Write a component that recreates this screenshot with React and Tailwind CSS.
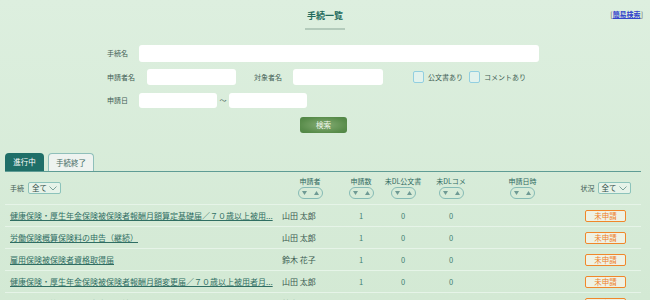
import React from "react";

const rows = [
    { name: "健康保険・厚生年金保険被保険者報酬月額算定基礎届／７０歳以上被用...", person: "山田 太郎" },
    { name: "労働保険概算保険料の申告（継続）", person: "山田 太郎" },
    { name: "雇用保険被保険者資格取得届", person: "鈴木 花子" },
    { name: "健康保険・厚生年金保険被保険者報酬月額変更届／７０歳以上被用者月...", person: "山田 太郎" },
    { name: "労働保険概算保険料の申告（継続）", person: "鈴木 花子" },
];

function SortPill() {
    return (
        <div className="w-[25px] h-[12px] rounded-full border border-[#86bbb5] flex items-center justify-center gap-[7px]">
            <svg width="5" height="4" viewBox="0 0 5 4"><path d="M0 0H5L2.5 4Z" fill="#6f9a94" /></svg>
            <svg width="5" height="4" viewBox="0 0 5 4"><path d="M0 4H5L2.5 0Z" fill="#6f9a94" /></svg>
        </div>
    );
}

function MiniSelect() {
    return (
        <div className="w-[33px] h-[12px] border border-[#8cc3bb] rounded-[2px] bg-[#e6f3e9] flex items-center justify-between pl-[3px] pr-[3px]">
            <span className="text-[7.5px] leading-none text-[#2f4a44]">全て</span>
            <svg width="8" height="5" viewBox="0 0 8 5"><path d="M0.5 0.5L4 4L7.5 0.5" stroke="#5f8c86" strokeWidth="0.8" fill="none" /></svg>
        </div>
    );
}

function ColHead({ label, className }) {
    return (
        <div className={"flex flex-col items-center gap-[2px] " + className}>
            <span className="text-[7px] leading-[8px] text-[#2f6a60] whitespace-nowrap">{label}</span>
            <SortPill />
        </div>
    );
}

function Checkbox({ label }) {
    return (
        <div className="flex items-center">
            <div className="w-[11px] h-[12px] rounded-[2px] border-[1.5px] border-[#92cfe0] bg-[#e2f2ec]"></div>
            <span className="ml-[4px] text-[7px] text-[#3f5e55] whitespace-nowrap">{label}</span>
        </div>
    );
}

export default function App() {
    return (
        <div className="w-[650px] h-[300px] overflow-hidden relative bg-gradient-to-b from-[#ddefdf] to-[#d3e9d4] font-['Noto_Sans_CJK_JP',sans-serif]">
            {/* Header */}
            <div className="h-[45px] relative">
                <div className="pt-[10px] flex flex-col items-center">
                    <h1 className="text-[9px] leading-[12px] font-bold text-[#226a5c]">手続一覧</h1>
                    <div className="mt-[6px] w-[40px] h-[2px] bg-[#b3cbbb]"></div>
                </div>
                <div className="absolute right-[7px] top-[9px] text-[7px] text-[#555]">
                    [<span className="text-[#3344cc] underline font-bold">簡易検索</span>]
                </div>
            </div>

            {/* Search form */}
            <div className="pl-[107px]">
                <div className="flex items-center h-[17px]">
                    <span className="w-[32px] text-[7px] text-[#3f5e55]">手続名</span>
                    <div className="w-[400px] h-[17px] bg-white rounded-[3px]"></div>
                </div>
                <div className="flex items-center h-[16px] mt-[7px]">
                    <span className="w-[40px] text-[7px] text-[#3f5e55]">申請者名</span>
                    <div className="w-[89px] h-[16px] bg-white rounded-[3px]"></div>
                    <span className="ml-[18px] w-[39px] text-[7px] text-[#3f5e55]">対象者名</span>
                    <div className="w-[90px] h-[16px] bg-white rounded-[3px]"></div>
                    <div className="ml-[30px]"><Checkbox label="公文書あり" /></div>
                    <div className="ml-[6px]"><Checkbox label="コメントあり" /></div>
                </div>
                <div className="flex items-center h-[15px] mt-[8px]">
                    <span className="w-[32px] text-[7px] text-[#3f5e55]">申請日</span>
                    <div className="w-[78px] h-[15px] bg-white rounded-[3px]"></div>
                    <span className="w-[12px] text-center text-[7px] text-[#4a6a60]">～</span>
                    <div className="w-[78px] h-[15px] bg-white rounded-[3px]"></div>
                </div>
                <button className="mt-[9px] ml-[193px] w-[47px] h-[16px] rounded-[3px] bg-[radial-gradient(ellipse_at_center,#86ad75_0%,#5a8d4c_70%,#4e8443_100%)] text-[7.5px] text-[#eef6ea] flex items-center justify-center">
                    検索
                </button>
            </div>

            {/* Tabs */}
            <div className="mt-[20px] mx-[5px] w-[636px] flex items-end gap-[4px] border-b border-[#5f9c95]">
                <div className="w-[39px] h-[18px] rounded-t-[4px] bg-[#1f6f68] text-white text-[7.5px] flex items-center justify-center">進行中</div>
                <div className="w-[46px] h-[18px] rounded-t-[4px] bg-[#eef3f0] border border-b-0 border-[#8fbfba] text-[#3f6a62] text-[7.5px] flex items-center justify-center">手続終了</div>
            </div>

            {/* Table */}
            <div className="mx-[5px] w-[636px]">
                <div className="h-[33px] flex items-center border-b border-[#e6f4e8]">
                    <div className="w-[272px] pl-[5px] flex items-center gap-[4px]">
                        <span className="text-[7px] text-[#3f5e55]">手続</span>
                        <MiniSelect />
                    </div>
                    <ColHead label="申請者" className="w-[66px]" />
                    <ColHead label="申請数" className="w-[36px]" />
                    <ColHead label="未DL公文書" className="w-[48px]" />
                    <ColHead label="未DLコメ" className="w-[48px]" />
                    <ColHead label="申請日時" className="w-[95px]" />
                    <div className="w-[71px] flex items-center justify-center gap-[3px]">
                        <span className="text-[7px] text-[#3f5e55]">状況</span>
                        <MiniSelect />
                    </div>
                </div>
                {rows.map((r, i) => (
                    <div key={i} className="h-[22px] flex items-center border-b border-[#e6f4e8]">
                        <div className="w-[272px] pl-[5px] whitespace-nowrap overflow-hidden text-[8px] text-[#2f6e63]">
                            <span className="underline">{r.name}</span>
                        </div>
                        <div className="w-[66px] pl-[5px] text-[8px] text-[#3a5a50]">{r.person}</div>
                        <div className="w-[36px] text-center text-[7.5px] text-[#3f7f74]">1</div>
                        <div className="w-[48px] text-center text-[7.5px] text-[#3f7f74]">0</div>
                        <div className="w-[48px] text-center text-[7.5px] text-[#3f7f74]">0</div>
                        <div className="w-[95px]"></div>
                        <div className="w-[71px] flex justify-center">
                            <div className="w-[41px] h-[12px] rounded-[2px] border border-[#f0872a] bg-[#eef2e4] text-[7.5px] text-[#ef7f2a] flex items-center justify-center">未申請</div>
                        </div>
                    </div>
                ))}
            </div>
        </div>
    );
}
